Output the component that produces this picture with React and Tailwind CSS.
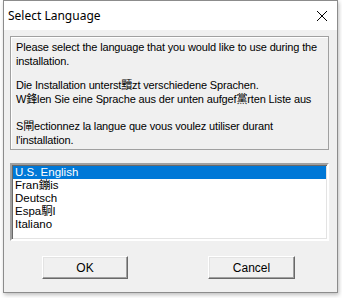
import React from 'react';

const body = { fontFamily: '"Liberation Sans", Arial, "Noto Sans CJK SC", sans-serif' };

const languages = ['U.S. English', 'Fran鏰is', 'Deutsch', 'Espa駉l', 'Italiano'];

function Button({ children }) {
  return (
    <button
      className="w-full h-[23px] bg-[#f0f0f0] border border-t-white border-l-white border-b-[#696969] border-r-[#696969] shadow-[inset_-1px_-1px_0_#a0a0a0,inset_1px_1px_0_#e3e3e3] text-[12px] text-black flex items-center justify-center"
      style={body}
    >
      {children}
    </button>
  );
}

export default function App() {
  return (
    <div className="w-[342px] h-[298px] bg-white overflow-hidden">
      <div className="ml-[3px] w-[335px] h-[293px] border border-[#8c8c8c] flex flex-col shadow-[1px_2px_4px_rgba(0,0,0,0.25)]">
        {/* title bar */}
        <div className="h-[29px] bg-white flex items-center justify-between pl-[4px] pr-[9px] shrink-0">
          <span className="text-[12px] text-black" style={{ fontFamily: '"Noto Sans", "Liberation Sans", sans-serif' }}>
            Select Language
          </span>
          <svg width="12" height="12" viewBox="0 0 12 12">
            <path d="M1 1 L11 11 M11 1 L1 11" stroke="#000" strokeWidth="1" fill="none" />
          </svg>
        </div>

        {/* body */}
        <div className="flex-1 bg-[#f0f0f0] pl-[6px] pr-[8px] pt-[6px] flex flex-col" style={body}>
          <div className="h-[114px] border border-[#a0a0a0] shadow-[inset_1px_1px_0_#fff] pl-[5px] pt-[3px] text-[11px] leading-[14px] tracking-[-0.15px] text-black">
            <p>Please select the language that you would like to use during the installation.</p>
            <p className="mt-[10px]">Die Installation unterst黷zt verschiedene Sprachen.</p>
            <p>W鋒len Sie eine Sprache aus der unten aufgef黨rten Liste aus</p>
            <p className="mt-[13px]">S閘ectionnez la langue que vous voulez utiliser durant l'installation.</p>
          </div>

          <div className="mt-[13px] h-[78px] bg-white border-2 border-t-[#a0a0a0] border-l-[#a0a0a0] border-b-white border-r-white shadow-[inset_1px_1px_0_#696969,inset_-1px_-1px_0_#e3e3e3] pt-[1px] px-[1px]">
            {languages.map((l, i) => (
              <div
                key={l}
                className={`h-[13px] leading-[13px] pl-[2px] text-[11.5px] ${i === 0 ? 'bg-[#0078d7] text-white' : 'text-black'}`}
              >
                {l}
              </div>
            ))}
          </div>

          <div className="mt-[15px] flex">
            <div className="ml-[32px] w-[86px]"><Button>OK</Button></div>
            <div className="ml-[80px] w-[87px]"><Button>Cancel</Button></div>
          </div>
        </div>
      </div>
    </div>
  );
}
